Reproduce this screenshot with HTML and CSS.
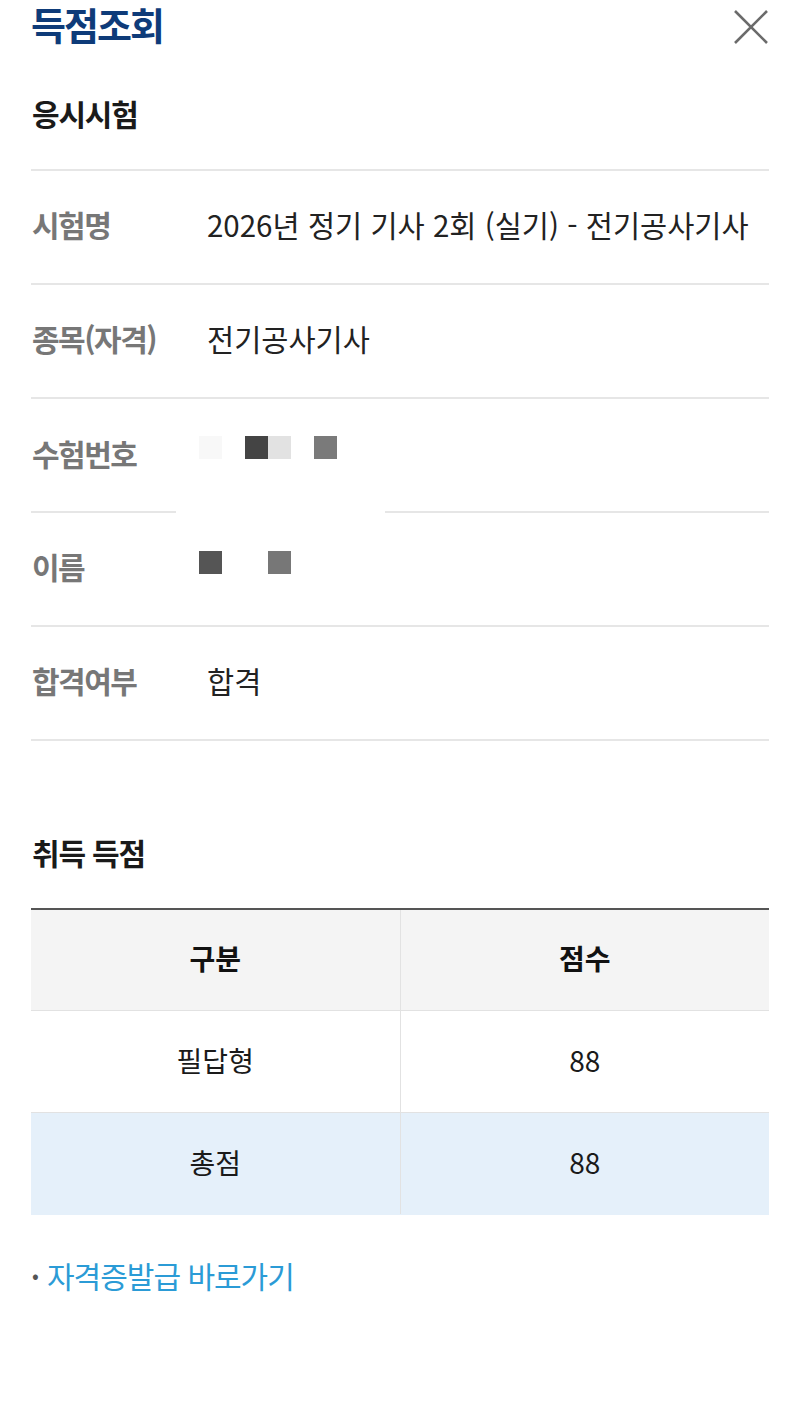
FILE: index.html
```html
<!DOCTYPE html>
<html lang="ko">
<head>
<meta charset="utf-8">
<title>득점조회</title>
<link rel="stylesheet" href="styles.css">
</head>
<body>
<div class="page">
  <header class="header">
    <h1 class="title">득점조회</h1>
    <button class="close" aria-label="닫기">
      <svg width="36" height="36" viewBox="0 0 36 36"><path d="M2 2 L34 34 M34 2 L2 34" stroke="#6b6b6b" stroke-width="2.6" fill="none"/></svg>
    </button>
  </header>

  <h2 class="section-title">응시시험</h2>
  <div class="info">
    <div class="row">
      <div class="label">시험명</div>
      <div class="value">2026년 정기 기사 2회 (실기) - 전기공사기사</div>
    </div>
    <div class="row">
      <div class="label">종목(자격)</div>
      <div class="value">전기공사기사</div>
    </div>
    <div class="row row-masked">
      <div class="label">수험번호</div>
      <div class="mosaic mosaic-id">
        <span class="cell c-f8"></span><span class="cell"></span><span class="cell c-44"></span><span class="cell c-e2"></span><span class="cell"></span><span class="cell c-7a"></span>
      </div>
    </div>
    <div class="row">
      <div class="label">이름</div>
      <div class="mosaic mosaic-name">
        <span class="cell c-55"></span><span class="cell"></span><span class="cell"></span><span class="cell c-77"></span>
      </div>
    </div>
    <div class="row">
      <div class="label">합격여부</div>
      <div class="value">합격</div>
    </div>
  </div>

  <h2 class="section-title section-title-score">취득 득점</h2>
  <table class="score">
    <thead>
      <tr><th>구분</th><th>점수</th></tr>
    </thead>
    <tbody>
      <tr><td>필답형</td><td>88</td></tr>
      <tr class="total"><td>총점</td><td>88</td></tr>
    </tbody>
  </table>

  <p class="link-line"><span class="bullet">•</span><a class="link" href="#">자격증발급 바로가기</a></p>
</div>
</body>
</html>
```

FILE: styles.css
```css
* { box-sizing: border-box; }
html, body { margin: 0; padding: 0; background: #fff; }
body {
  font-family: "Noto Sans CJK KR", "Noto Sans", sans-serif;
  color: #222;
}
.page { padding: 0 31px; }

.header {
  height: 54px;
  display: flex;
  align-items: flex-start;
  justify-content: space-between;
}
.title {
  margin: 0;
  font-size: 38px;
  line-height: 48px;
  font-weight: 700;
  letter-spacing: -2px;
  color: #0e3b79;
}
.close {
  border: 0;
  background: none;
  padding: 0;
  margin-top: 9px;
  width: 36px;
  height: 36px;
  display: flex;
}

.section-title {
  margin: 39px 0 36px 1px;
  font-size: 30px;
  line-height: 40px;
  font-weight: 700;
  letter-spacing: -1.2px;
  color: #1a1a1a;
}
.section-title-score { margin-top: 91px; }

.info { border-top: 2px solid #e6e6e6; }
.row {
  height: 114px;
  display: flex;
  align-items: center;
  padding-bottom: 6px;
  border-bottom: 2px solid #e6e6e6;
}
.row-masked {
  border-bottom: 0;
  background: linear-gradient(to right, #e6e6e6 145px, transparent 145px, transparent 354px, #e6e6e6 354px) left bottom / 100% 2px no-repeat;
}
.label {
  width: 176px;
  flex: none;
  padding-left: 1px;
  font-size: 30px;
  font-weight: 700;
  letter-spacing: -1.5px;
  color: #777;
}
.value {
  font-size: 29.5px;
  color: #222;
}
.mosaic {
  display: grid;
  grid-template-columns: repeat(6, 23px);
  grid-auto-rows: 23px;
  margin-left: -8px;
  margin-top: -12px;
}
.mosaic-name { margin-top: -8px; }
.c-f8 { background: #f8f8f8; }
.c-44 { background: #444; }
.c-e2 { background: #e2e2e2; }
.c-7a { background: #7a7a7a; }
.c-55 { background: #555; }
.c-77 { background: #777; }

.score {
  width: 100%;
  border-collapse: collapse;
  table-layout: fixed;
  border-top: 2px solid #555;
}
.score th, .score td {
  text-align: center;
  font-size: 28px;
  border-bottom: 1px solid #e2e2e2;
  padding-bottom: 4px;
}
.score th + th, .score td + td { border-left: 1px solid #e2e2e2; }
.score th {
  height: 101px;
  background: #f4f4f4;
  font-weight: 700;
  color: #111;
}
.score td {
  height: 102px;
  font-weight: 400;
  color: #1a1a1a;
}
.score .total td { background: #e5f0fa; border-bottom-color: #e5f0fa; }

.link-line {
  margin: 40px 0 0 0;
  line-height: 40px;
  display: flex;
  align-items: center;
}
.bullet {
  font-size: 20px;
  color: #555;
  width: 16px;
  padding-left: 1px;
}
.link {
  font-size: 30px;
  letter-spacing: -1px;
  color: #2b9bd6;
  text-decoration: none;
}
```
